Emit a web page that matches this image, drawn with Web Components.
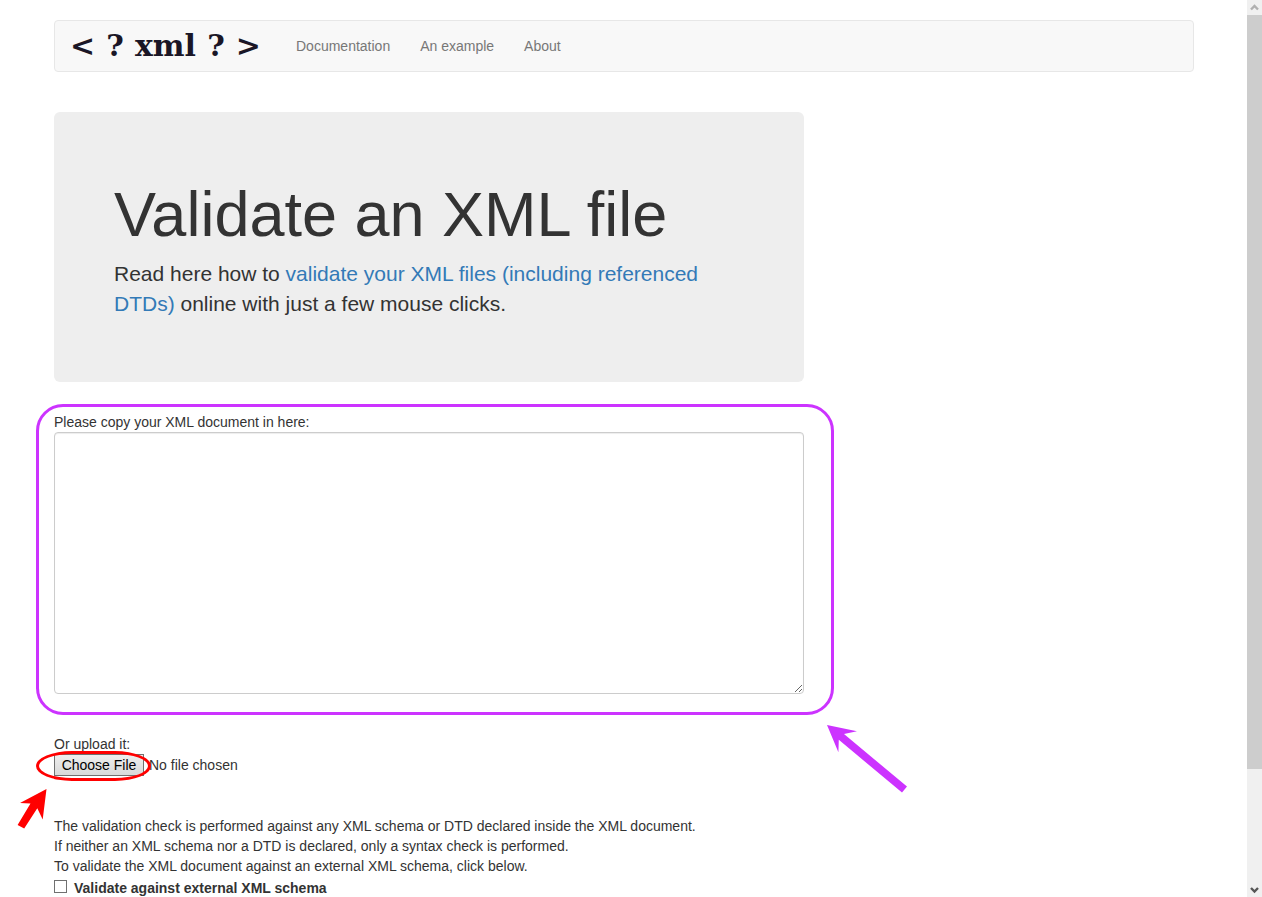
<!DOCTYPE html>
<html lang="en">
<head>
<meta charset="utf-8">
<title>Validate an XML file</title>
<style>
  body { margin: 0; background: #fff; color: #333; font: 14px/20px "Liberation Sans", Arial, sans-serif; }
</style>
</head>
<body>
<page-shell>
  <site-nav></site-nav>
  <content-column>
    <hero-banner heading="Validate an XML file">Read here how to <a href="#help">validate your XML files (including referenced DTDs)</a> online with just a few mouse clicks.</hero-banner>
    <xml-input></xml-input>
    <file-upload></file-upload>
    <schema-option>
      The validation check is performed against any XML schema or DTD declared inside the XML document.<br>
      If neither an XML schema nor a DTD is declared, only a syntax check is performed.<br>
      To validate the XML document against an external XML schema, click below.
    </schema-option>
  </content-column>
</page-shell>
<script>
const define = (name, html) => {
  const template = document.createElement('template');
  template.innerHTML = '<style>:host{display:block}*{box-sizing:border-box}</style>' + html;
  customElements.define(name, class extends HTMLElement {
    constructor() {
      super();
      this.attachShadow({ mode: 'open' }).append(template.content.cloneNode(true));
    }
    connectedCallback() {
      const heading = this.shadowRoot.querySelector('h1');
      if (heading) heading.textContent = this.getAttribute('heading');
    }
  });
};

define('scroll-rail', `
<style>
  :host { display: flex; flex-direction: column; background: #f0f0f0; }
  svg { display: block; width: 15px; height: 15px; flex: none; }
  .track { flex: 1; }
  .thumb { height: 87%; background: #cdcdcd; }
</style>
<svg viewBox="0 0 15 15"><path d="M4 9.5 7.5 6 11 9.5" fill="none" stroke="#b0b0b0" stroke-width="2.4"/></svg>
<div class="track"><div class="thumb"></div></div>
<svg viewBox="0 0 15 15"><path d="M4 6 7.5 9.5 11 6" fill="none" stroke="#555" stroke-width="2.4"/></svg>`);

define('page-shell', `
<style>
  :host { display: grid; grid-template-columns: minmax(0, 1fr) 15px; height: 100vh; overflow: hidden; }
  .view { min-width: 0; overflow: hidden; padding: 20px 16px 0 17px; }
  main { max-width: 1140px; margin: 0 auto; }
</style>
<div class="view"><main><slot></slot></main></div>
<scroll-rail></scroll-rail>`);

define('site-nav', `
<style>
  nav { display: flex; align-items: center; min-height: 52px; background: #f8f8f8; border: 1px solid #e7e7e7; border-radius: 4px; }
  a { color: #777; text-decoration: none; padding: 15px; }
  .brand { display: flex; justify-content: space-between; align-items: center; width: 226px; padding: 0 20px 0 15px; color: #1a1626; font: bold 30px/50px "DejaVu Serif", serif; }
</style>
<nav>
  <a class="brand" href="#home"><span>&lt;</span><span>?</span><span>xml</span><span>?</span><span>&gt;</span></a>
  <a href="#documentation">Documentation</a>
  <a href="#example">An example</a>
  <a href="#about">About</a>
</nav>`);

define('content-column', `
<style>:host { max-width: 750px; margin-top: 40px; }</style>
<slot></slot>`);

define('hero-banner', `
<style>
  :host { background: #eee; border-radius: 6px; padding: 68px 60px 63px; margin-bottom: 30px; }
  h1 { margin: 0 0 10px; font-size: 63px; line-height: 69px; font-weight: 400; }
  p { margin: 0; font-size: 21px; line-height: 30px; }
  ::slotted(a) { color: #337ab7; text-decoration: none; }
</style>
<h1></h1><p><slot></slot></p>`);

define('xml-input', `
<style>
  :host { position: relative; margin-bottom: 40px; }
  label, textarea { display: block; }
  textarea { width: 100%; height: 262px; margin: 0; padding: 6px 12px; border: 1px solid #ccc; border-radius: 4px; box-shadow: inset 0 1px 1px rgba(0,0,0,.075); font: inherit; color: #555; resize: vertical; }
  .ring { position: absolute; inset: -8px -30px -21px -18px; border: 3px solid #cc33ff; border-radius: 27px; pointer-events: none; }
  svg { position: absolute; left: 772px; top: 312px; width: 82px; height: 70px; pointer-events: none; }
</style>
<label for="xml">Please copy your XML document in here:</label>
<textarea id="xml"></textarea>
<div class="ring"></div>
<svg viewBox="0 0 82 70"><path d="M1 1 31 7.2 18 10 81 62.6 76 68.6 12.8 15.8 12.4 28.2Z" fill="#cc33ff"/></svg>`);

define('file-upload', `
<style>
  :host { position: relative; margin-bottom: 40px; }
  label, input { display: block; }
  input { font: inherit; height: 22px; width: 100%; color: #333; }
  input::file-selector-button { box-sizing: border-box; height: 22px; width: 90px; margin: 0 5px 0 0; padding: 0; border: 1px solid #707070; border-radius: 0; background: linear-gradient(#eee, #d9d9d9); font: inherit; color: #000; }
  .ring { position: absolute; left: -18px; top: 17px; width: 115px; height: 30px; border: 3px solid #ff0000; border-radius: 36px / 15px; pointer-events: none; }
  svg { position: absolute; left: -38px; top: 54px; width: 32px; height: 42px; pointer-events: none; }
</style>
<label for="file">Or upload it:</label>
<input id="file" type="file">
<div class="ring"></div>
<svg viewBox="0 0 32 42"><path d="M30.5 1 4 15 14.5 15.5 1.6 37 8.2 40.6 21.3 20.3 26.7 31.5Z" fill="#ff0000"/></svg>`);

define('schema-option', `
<style>
  label { display: flex; align-items: center; gap: 7px; margin-top: 2px; font-weight: 700; }
  input { appearance: none; width: 13px; height: 13px; margin: 0 0 3px; border: 1px solid #707070; background: #fff; }
  input:checked { background: #337ab7; }
</style>
<slot></slot>
<label><input type="checkbox">Validate against external XML schema</label>`);
</script>
</body>
</html>
